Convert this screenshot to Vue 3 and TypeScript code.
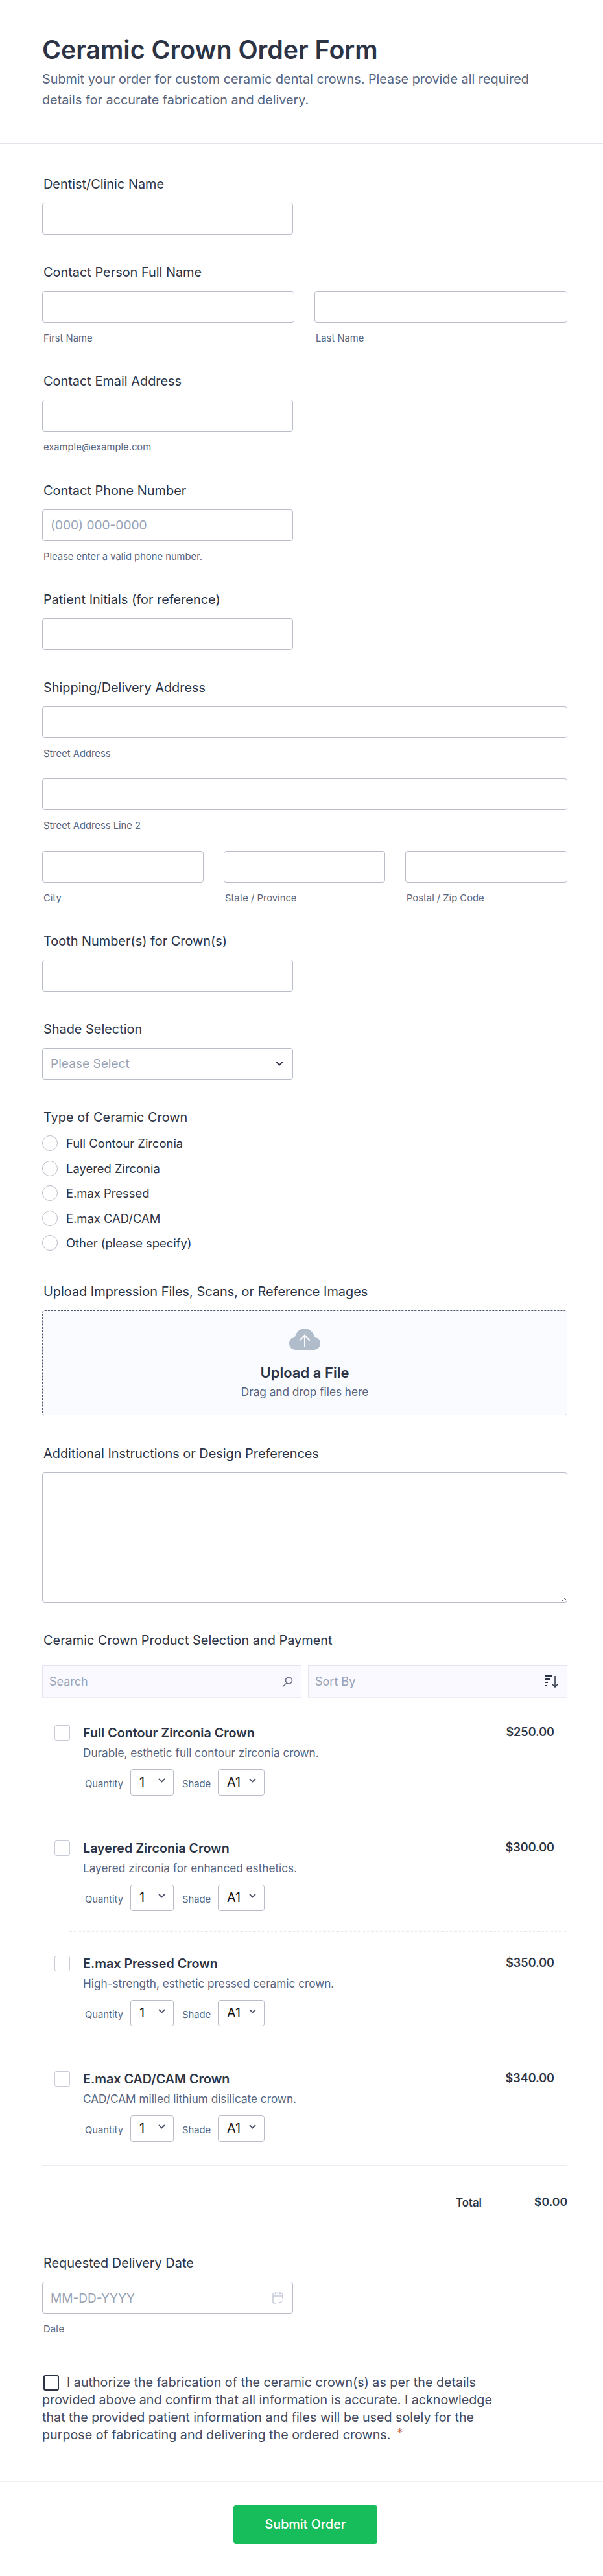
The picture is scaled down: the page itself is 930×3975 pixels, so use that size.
<script setup lang="ts">
interface Product {
  name: string
  desc: string
  price: string
}

const crownTypes: string[] = [
  'Full Contour Zirconia',
  'Layered Zirconia',
  'E.max Pressed',
  'E.max CAD/CAM',
  'Other (please specify)',
]

const products: Product[] = [
  { name: 'Full Contour Zirconia Crown', desc: 'Durable, esthetic full contour zirconia crown.', price: '$250.00' },
  { name: 'Layered Zirconia Crown', desc: 'Layered zirconia for enhanced esthetics.', price: '$300.00' },
  { name: 'E.max Pressed Crown', desc: 'High-strength, esthetic pressed ceramic crown.', price: '$350.00' },
  { name: 'E.max CAD/CAM Crown', desc: 'CAD/CAM milled lithium disilicate crown.', price: '$340.00' },
]
</script>

<template>
  <div class="page">
    <header class="head">
      <h1>Ceramic Crown Order Form</h1>
      <p>Submit your order for custom ceramic dental crowns. Please provide all required details for accurate fabrication and delivery.</p>
    </header>

    <main class="body">
      <section class="field">
        <label class="label">Dentist/Clinic Name</label>
        <input class="input half" type="text" />
      </section>

      <section class="field">
        <label class="label">Contact Person Full Name</label>
        <div class="row two">
          <div><input class="input" type="text" /><div class="sub">First Name</div></div>
          <div><input class="input" type="text" /><div class="sub">Last Name</div></div>
        </div>
      </section>

      <section class="field">
        <label class="label">Contact Email Address</label>
        <input class="input half" type="text" />
        <div class="sub">example@example.com</div>
      </section>

      <section class="field">
        <label class="label">Contact Phone Number</label>
        <input class="input half" type="text" placeholder="(000) 000-0000" />
        <div class="sub">Please enter a valid phone number.</div>
      </section>

      <section class="field">
        <label class="label">Patient Initials (for reference)</label>
        <input class="input half" type="text" />
      </section>

      <section class="field">
        <label class="label">Shipping/Delivery Address</label>
        <input class="input" type="text" />
        <div class="sub addr">Street Address</div>
        <input class="input" type="text" />
        <div class="sub addr">Street Address Line 2</div>
        <div class="row three">
          <div><input class="input" type="text" /><div class="sub">City</div></div>
          <div><input class="input" type="text" /><div class="sub">State / Province</div></div>
          <div><input class="input" type="text" /><div class="sub">Postal / Zip Code</div></div>
        </div>
      </section>

      <section class="field">
        <label class="label">Tooth Number(s) for Crown(s)</label>
        <input class="input half" type="text" />
      </section>

      <section class="field">
        <label class="label">Shade Selection</label>
        <div class="input half select">
          <span>Please Select</span>
          <svg width="12" height="8" viewBox="0 0 12 8" fill="none" stroke="#343c52" stroke-width="2"><path d="M1 1.5l5 5 5-5" /></svg>
        </div>
      </section>

      <section class="field radios-field">
        <label class="label radios-label">Type of Ceramic Crown</label>
        <div v-for="t in crownTypes" :key="t" class="radio-row">
          <span class="radio"></span>
          <span>{{ t }}</span>
        </div>
      </section>

      <section class="field drop-field">
        <label class="label">Upload Impression Files, Scans, or Reference Images</label>
        <div class="drop">
          <svg class="cloud" width="48" height="33" viewBox="0 0 48 33">
            <path fill="#b1bccb" d="M10 33C4.5 33 0 28.700 0 23c0-5.200 3.800-9.500 9-10.200C11 5.300 16.900 0 24 0s13 5.300 15 12.800c5.200.7 9 5 9 10.200 0 5.700-4.500 10-10 10z" />
            <path fill="none" stroke="#fafbff" stroke-width="2" d="M24 28V11M16 18.500l8-8 8 8" />
          </svg>
          <div class="drop-title">Upload a File</div>
          <div class="drop-sub">Drag and drop files here</div>
        </div>
      </section>

      <section class="field">
        <label class="label">Additional Instructions or Design Preferences</label>
        <textarea class="input area"></textarea>
      </section>

      <section class="field products">
        <label class="label">Ceramic Crown Product Selection and Payment</label>
        <div class="tools">
          <div class="tool">
            <span>Search</span>
            <svg width="17" height="16" viewBox="0 0 17 16" fill="none" stroke="#666c80" stroke-width="1.600"><circle cx="10.500" cy="6" r="5" /><path d="M7 10l-6 5.500" /></svg>
          </div>
          <div class="tool">
            <span>Sort By</span>
            <svg width="21" height="19" viewBox="0 0 21 19" fill="none" stroke="#2c3345"><path stroke-width="2" d="M0 1h10M0 6h7M0 11h4M0 16h2" /><path stroke-width="1.500" d="M15 1v17M10 13l5 5 5-5" /></svg>
          </div>
        </div>

        <div class="plist">
          <article v-for="p in products" :key="p.name" class="product">
            <span class="pcheck"></span>
            <div class="pmain">
              <div class="ptitle">{{ p.name }}</div>
              <div class="pdesc">{{ p.desc }}</div>
              <div class="popts">
                <span class="olabel">Quantity</span>
                <div class="mini qty">
                  <span>1</span>
                  <svg width="11" height="7" viewBox="0 0 11 7" fill="none" stroke="#4a5167" stroke-width="1.800"><path d="M1 1l4.500 4.500L10 1" /></svg>
                </div>
                <span class="olabel shade">Shade</span>
                <div class="mini sh">
                  <span>A1</span>
                  <svg width="11" height="7" viewBox="0 0 11 7" fill="none" stroke="#4a5167" stroke-width="1.800"><path d="M1 1l4.500 4.500L10 1" /></svg>
                </div>
              </div>
            </div>
            <div class="price">{{ p.price }}</div>
          </article>
        </div>

        <div class="total">
          <span class="tlabel">Total</span>
          <span class="tvalue">$0.00</span>
        </div>
      </section>

      <section class="field">
        <label class="label">Requested Delivery Date</label>
        <div class="input half select date">
          <span>MM-DD-YYYY</span>
          <svg width="17" height="19" viewBox="0 0 17 19" fill="none" stroke="#c5cad6" stroke-width="1.500"><path d="M6 18H3a2 2 0 0 1-2-2V4.500a2 2 0 0 1 2-2h11a2 2 0 0 1 2 2V11M1 7h15M5 .5v4M12 .5v4M10 15.500l2 2 3.500-3.500" /></svg>
        </div>
        <div class="sub">Date</div>
      </section>

      <section class="consent">
        <span class="cbox"></span>I authorize the fabrication of the ceramic crown(s) as per the details provided above and confirm that all information is accurate. I acknowledge that the provided patient information and files will be used solely for the purpose of fabricating and delivering the ordered crowns.<span class="req">*</span>
      </section>
    </main>

    <footer class="foot">
      <button class="submit" type="button">Submit Order</button>
    </footer>
  </div>
</template>

<style>
html, body { margin: 0; background: #fff; }
</style>

<style scoped>
.page {
  width: 930px;
  height: 3975px;
  background: #fff;
  font-family: Inter, "Liberation Sans", sans-serif;
  color: #2c3345;
  overflow: hidden;
}
.head {
  padding: 55px 65px 50px;
  border-bottom: 2px solid #e3e5ec;
}
.head h1 {
  margin: 0;
  font-size: 39.3px;
  line-height: 44px;
  font-weight: 600;
  color: #2c3345;
}
.head p {
  margin: 7px 0 0;
  font-size: 19.800px;
  line-height: 32px;
  color: #57647e;
}
.body { padding: 52px 55px 0 65px; }
.field { margin-bottom: 48px; }
.label {
  display: block;
  height: 20px;
  margin: 0 0 19px 2px;
  font-size: 19.900px;
  line-height: 20px;
  font-weight: 400;
  color: #2c3345;
}
.input {
  display: block;
  box-sizing: border-box;
  width: 100%;
  height: 49px;
  padding: 0 12px;
  background: #fff;
  border: 1px solid #b8bdc9;
  border-radius: 4px;
  font: 19.100px Inter, "Liberation Sans", sans-serif;
  outline: none;
}
.input::placeholder { color: #98a2b5; opacity: 1; }
.half { width: 387px; }
.sub {
  margin: 16px 0 0 2px;
  font-size: 14.750px;
  line-height: 16.33px;
  color: #57647e;
}
.sub.addr { margin-bottom: 30px; }
.row { display: grid; }
.row.two { grid-template-columns: 389px 390px; column-gap: 31px; }
.row.three { grid-template-columns: 249px 249px 250px; column-gap: 31px; }
.select {
  display: flex;
  align-items: center;
  justify-content: space-between;
  padding-right: 14px;
  color: #98a2b5;
}
.radios-field { margin-bottom: 46px; }
.radios-label { margin-bottom: 11px; }
.radio-row {
  display: flex;
  align-items: center;
  gap: 13px;
  height: 38.500px;
  font-size: 18.400px;
  color: #2c3345;
}
.radio {
  box-sizing: border-box;
  width: 24px;
  height: 24px;
  border: 1px solid #b8bdc9;
  border-radius: 50%;
  background: #fff;
}
.drop-field { margin-bottom: 49px; }
.drop {
  box-sizing: border-box;
  height: 162px;
  padding-top: 27px;
  background: #fafbff;
  border: 1px dashed #50566d;
  border-radius: 4px;
  text-align: center;
}
.cloud { display: block; margin: 0 auto 23px; }
.drop-title { font-size: 22px; line-height: 24px; font-weight: 600; color: #2c3345; }
.drop-sub { margin-top: 8px; font-size: 17.200px; line-height: 20px; color: #57647e; }
.area { height: 201px; resize: both; }
.products { margin-bottom: 73px; }
.products .label { margin-bottom: 29px; }
.tools {
  display: grid;
  grid-template-columns: 1fr 1fr;
  column-gap: 10px;
}
.tool {
  box-sizing: border-box;
  height: 49px;
  display: flex;
  align-items: center;
  justify-content: space-between;
  padding: 0 12px 0 10px;
  background: #f9f9ff;
  border: 1px solid #e3e5f0;
  box-shadow: 0 1px 0 #eceef5;
  font-size: 18px;
  color: #98a2b5;
}
.plist { margin-top: 6px; border-bottom: 2px solid #eaecf3; }
.product {
  display: flex;
  align-items: flex-start;
  padding: 37px 20px 31px 0;
  border-bottom: 1px dotted #e6e8f0;
  margin-left: 42px;
  position: relative;
}
.product:last-child { border-bottom: none; padding-bottom: 36px; }
.pcheck {
  position: absolute;
  left: -23px;
  top: 37px;
  box-sizing: border-box;
  width: 24px;
  height: 24px;
  border: 1px solid #c8ccd8;
  border-radius: 3px;
  background: #fff;
}
.pmain { flex: 1; margin-left: 21px; }
.ptitle { font-size: 19.700px; line-height: 24px; font-weight: 600; color: #2c3345; }
.pdesc { margin-top: 9px; font-size: 17.200px; line-height: 20px; color: #57647e; }
.popts { display: flex; align-items: flex-start; margin-top: 15px; }
.olabel {
  margin-left: 3px;
  padding-top: 13px;
  font-size: 14.800px;
  line-height: 20px;
  color: #57647e;
  width: 59px;
}
.olabel.shade { margin-left: 13px; width: 44px; }
.mini {
  box-sizing: border-box;
  height: 41px;
  margin-left: 11px;
  display: flex;
  align-items: center;
  justify-content: space-between;
  padding: 0 12px 2px 13px;
  border: 1px solid #b8bdc9;
  border-radius: 4px;
  font-size: 19.700px;
  color: #121212;
}
.mini.qty { width: 67px; }
.mini.sh { width: 72px; }
.mini svg { margin-bottom: 4px; }
.price { font-size: 18px; line-height: 22px; font-weight: 600; color: #2c3345; }
.total {
  display: flex;
  justify-content: flex-end;
  align-items: center;
  height: 24px;
  margin-top: 42px;
}
.tlabel { font-size: 16.800px; font-weight: 600; padding-top: 4px; }
.tvalue { width: 132px; text-align: right; font-size: 17.600px; font-weight: 600; }
.consent {
  width: 720px;
  margin-top: 60px;
  font-size: 19.700px;
  line-height: 27px;
  color: #434a60;
}
.cbox {
  display: inline-block;
  vertical-align: -6px;
  box-sizing: border-box;
  width: 24px;
  height: 24px;
  margin: 0 12px 0 2px;
  border: 2px solid #2c3345;
  border-radius: 3px;
  background: #fff;
}
.req { margin-left: 10px; color: #c4622d; font-size: 18px; position: relative; top: -3px; }
.foot {
  margin-top: 57px;
  padding-top: 36px;
  border-top: 2px solid #eceef3;
  display: flex;
  justify-content: center;
}
.submit {
  width: 222px;
  height: 59px;
  margin-left: 12px;
  border: none;
  border-radius: 4px;
  background: #18bd5b;
  color: #fff;
  font: 500 19.700px Inter, "Liberation Sans", sans-serif;
}
</style>
